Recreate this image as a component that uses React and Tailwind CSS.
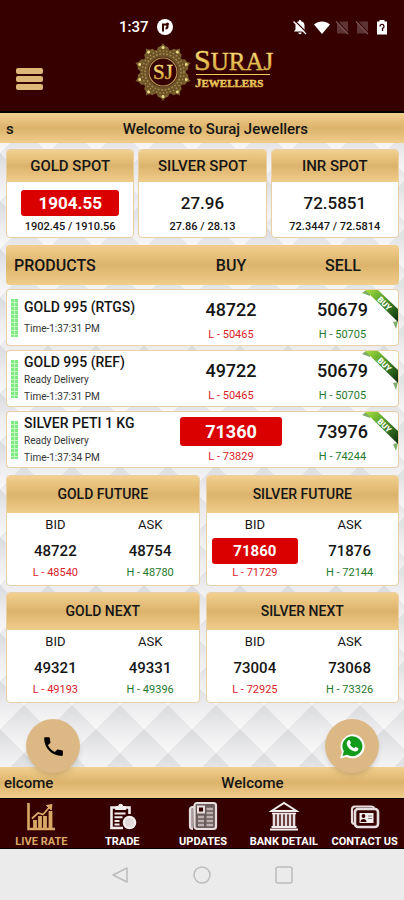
import { MdPhone } from "react-icons/md";

const spots = [
  { name: "GOLD SPOT", value: "1904.55", low: "1902.45", high: "1910.56", hot: true },
  { name: "SILVER SPOT", value: "27.96", low: "27.86", high: "28.13" },
  { name: "INR SPOT", value: "72.5851", low: "72.3447", high: "72.5814" },
];

const products = [
  { name: "GOLD 995 (RTGS)", time: "1:37:31 PM", buy: "48722", sell: "50679", low: "50465", high: "50705" },
  { name: "GOLD 995 (REF)", note: "Ready Delivery", time: "1:37:31 PM", buy: "49722", sell: "50679", low: "50465", high: "50705" },
  { name: "SILVER PETI 1 KG", note: "Ready Delivery", time: "1:37:34 PM", buy: "71360", sell: "73976", low: "73829", high: "74244", hot: true },
];

const contracts = [
  { name: "GOLD FUTURE", bid: "48722", ask: "48754", low: "48540", high: "48780" },
  { name: "SILVER FUTURE", bid: "71860", ask: "71876", low: "71729", high: "72144", hot: true },
  { name: "GOLD NEXT", bid: "49321", ask: "49331", low: "49193", high: "49396" },
  { name: "SILVER NEXT", bid: "73004", ask: "73068", low: "72925", high: "73326" },
];

const tabs = [
  { label: "LIVE RATE", Icon: ChartIcon, active: true },
  { label: "TRADE", Icon: ClipboardIcon },
  { label: "UPDATES", Icon: NewsIcon },
  { label: "BANK DETAIL", Icon: BankIcon },
  { label: "CONTACT US", Icon: ContactIcon },
];

function ChartIcon() {
  return (
    <svg viewBox="0 0 30 30" className="size-[30px]" fill="none" stroke="#d9a866">
      <path d="M2.500 2v26H29" strokeWidth="2.600" />
      <path d="M9 27v-8M14 27V15M19 27V15M24.500 27V10" strokeWidth="3.800" />
      <path d="M6 17.500l6-5.500 5 1.500 7-8" strokeWidth="1.800" />
      <path d="M20.500 4.500l5.500-1-.8 5.500z" fill="#d9a866" />
    </svg>
  );
}

function ClipboardIcon() {
  return (
    <svg viewBox="0 0 30 30" className="size-[30px]" fill="none" stroke="#f3eeee">
      <path d="M16 27H4.500V6.500H8M19 6.500h3.500V13" strokeWidth="2.600" />
      <path d="M8.500 8.500V5.500h3a2.200 2.200 0 0 1 4.400 0h3v3z" fill="#f3eeee" />
      <path d="M7.500 12.500h11M7.500 16.300h8M7.500 20h5M7.500 23.500h5" strokeWidth="2" />
      <circle cx="22.500" cy="21.500" r="6.800" fill="#f3eeee" stroke="none" />
      <circle cx="22.500" cy="21.500" r="4.600" fill="#e2d9d9" stroke="none" />
    </svg>
  );
}

function NewsIcon() {
  return (
    <svg viewBox="0 0 30 30" className="size-[30px]" fill="none" stroke="#e6dede">
      <path d="M6 6H4.500a2.500 2.500 0 0 0-2.500 2.500V25a3 3 0 0 0 3 3" strokeWidth="2.200" fill="#a89c9c" />
      <rect x="6.500" y="2" width="21.500" height="26" rx="2.500" strokeWidth="2.200" fill="#6d5c5c" />
      <rect x="10" y="5.500" width="6" height="6" fill="#370000" strokeWidth="2" />
      <path d="M18.500 8H25M18.500 12H25M10 16h6M18.500 16H25M10 20h6M18.500 20H25M10 24h6M18.500 24H25" stroke="#bdb0b0" strokeWidth="2.400" />
    </svg>
  );
}

function BankIcon() {
  return (
    <svg viewBox="0 0 30 30" className="size-[30px]" fill="none" stroke="#f3eeee">
      <path d="M2.500 10L15 2l12.500 8z" strokeWidth="2" />
      <path d="M3 12.500h24" strokeWidth="1.600" />
      <path d="M5 13v12M9 13v12M13 13v12M17 13v12M21 13v12M25 13v12" strokeWidth="2.600" stroke="#e6dede" />
      <path d="M2.500 26h25M1 28.500h28" strokeWidth="1.800" />
    </svg>
  );
}

function ContactIcon() {
  return (
    <svg viewBox="0 0 30 30" className="size-[30px]" fill="none" stroke="#e6dede">
      <path d="M4 23a3 3 0 0 1-2-3V8.500a3 3 0 0 1 3-3h16.500a3 3 0 0 1 2.800 2" strokeWidth="2.200" />
      <rect x="5" y="8" width="23" height="18" rx="3" strokeWidth="2.600" />
      <rect x="9.500" y="12" width="14" height="10" fill="#f3eeee" stroke="none" />
      <circle cx="13.500" cy="15" r="1.900" fill="#370000" stroke="none" />
      <path d="M10.500 21c0-4 6-4 6 0z" fill="#370000" stroke="none" />
      <path d="M18 15h4M18 17.500h4" stroke="#8d7a7a" strokeWidth="1" />
    </svg>
  );
}

function WhatsappIcon() {
  return (
    <svg viewBox="0 0 26 26" className="size-[26px]">
      <path d="M1 25.500l2-6.500A12 12 0 1 1 7.500 23.700z" fill="#fff" />
      <path d="M3.500 23l1.300-4.700A10 10 0 1 1 8.300 21.800z" fill="#129b1a" />
      <path d="M9.300 7.200c.5-.5 1.300-.4 1.600.2l.9 2c.2.400 0 .9-.9 1.900 1 2 2.300 3.100 4.200 3.900.9-1.100 1.300-1.500 1.800-1.200l2 1c.6.300.6.800.4 1.500-.4 1.300-1.800 2-3.300 1.900-3.900-.3-8-4.300-8.300-7.900-.1-1.400.7-2.500 1.600-3.300z" fill="#fff" />
    </svg>
  );
}

function Logo() {
  const petals = Array.from({ length: 10 }, (_, i) => i * 36);
  return (
    <svg viewBox="0 0 142 58" className="h-[58px] w-[142px]" role="img" aria-label="Suraj Jewellers">
      <defs>
        <linearGradient id="gold" x1="0" y1="0" x2="0" y2="1">
          <stop offset="0" stopColor="#fff3a0" />
          <stop offset="0.500" stopColor="#ecca5e" />
          <stop offset="1" stopColor="#b98a2c" />
        </linearGradient>
      </defs>
      <g transform="translate(29 29)">
        {petals.map((angle) => (
          <g key={angle} transform={`rotate(${angle})`}>
            <path d="M-7.500 -19L-5 -25Q-2 -25 0 -29Q2 -25 5 -25L7.500 -19z" fill="#79602f" />
            <circle cy="-24.500" r="1.500" fill="#ecd98a" />
            <circle cy="-18.500" r="1" fill="#c2a558" transform="rotate(18)" />
          </g>
        ))}
        <circle r="19" fill="none" stroke="#6b5127" strokeWidth="8" />
        <circle r="21" fill="none" stroke="#a58a4c" strokeWidth="1.500" strokeDasharray="1.500 2" />
        <circle r="18" fill="none" stroke="#a58a4c" strokeWidth="1.500" strokeDasharray="2 1.500" />
        <circle r="14" fill="#370000" stroke="#b89b54" strokeWidth="1.200" />
        <g fontFamily="Liberation Serif, serif" fontSize="21" fill="url(#gold)" stroke="url(#gold)" strokeWidth="0.400">
          <text y="7" textAnchor="middle">SJ</text>
        </g>
      </g>
      <g fontFamily="Liberation Serif, serif" fill="url(#gold)" stroke="#ecca5e" strokeWidth="0.400">
        <text x="60" y="27" fontSize="30">S<tspan fontSize="25">URAJ</tspan></text>
        <rect x="62" y="31" width="74" height="1" stroke="none" />
        <text x="61" y="44" fontSize="13" fontWeight="700">J<tspan fontSize="11">EWELLERS</tspan></text>
      </g>
    </svg>
  );
}

function StatusIcons() {
  return (
    <svg viewBox="0 0 96 18" className="h-[18px] w-[96px]">
      <path d="M2 13.500h12l-1.500-2V7.500c0-2.500-1.500-4-3.300-4.300a1.200 1.200 0 0 0-2.400 0C5 3.500 3.500 5 3.500 7.500v4zM6.300 14.500h3.400a1.700 1.700 0 0 1-3.400 0z" fill="#fff" />
      <path d="M2.500 2.500l13 13" stroke="#370000" strokeWidth="1.200" />
      <path d="M1.500 3.500l12.500 12.500" stroke="#fff" strokeWidth="1.300" />
      <path d="M22 6.500c4.500-4 11.500-4 16 0l-8 9.500z" fill="#fff" />
      <path d="M48 3.500h8v12H45v-9zM68 3.500h8v12H65v-9z" fill="#5f3434" />
      <path d="M45 3l12 13M65 3l12 13" stroke="#370000" strokeWidth="1.500" />
      <path d="M44 3.500l12 12.500M64 3.500l12 12.500" stroke="#7b5656" strokeWidth="1.200" />
      <path d="M85 3.500h2.500V2h5v1.500H95V16.500H85z" fill="#fff" />
      <path d="M88 8.500a2 2 0 1 1 2.500 1.900v2.600" fill="none" stroke="#370000" strokeWidth="1.300" />
    </svg>
  );
}

// strip of small green ticks on the left of each product
function Meter() {
  return (
    <svg viewBox="0 0 7 38" className="h-[38px] w-[7px] shrink-0">
      <rect width="7" height="38" fill="#7dea80" />
      <path d="M0 3.500h7M0 7.500h7M0 11.500h7M0 15.500h7M0 19.500h7M0 23.500h7M0 27.500h7M0 31.500h7M0 35.500h7M3.500 0v38" stroke="#c3f7c4" />
    </svg>
  );
}

function Ribbon() {
  return (
    <svg viewBox="0 0 38 40" className="absolute top-0 right-0 h-[40px] w-[38px]">
      <defs>
        <linearGradient id="ribbon" x1="0" y1="0" x2="1" y2="1">
          <stop offset="0" stopColor="#a9e03c" />
          <stop offset="0.450" stopColor="#4d9a2c" />
          <stop offset="1" stopColor="#0a2c0d" />
        </linearGradient>
      </defs>
      <path d="M2 3l4-3h4v6zM33 32l3 7 2-8z" fill="#7fae6a" />
      <path d="M5 0h13l20 19v13z" fill="url(#ribbon)" />
      <text transform="translate(17 10) rotate(45)" fontFamily="Roboto, sans-serif" fontSize="8" fontWeight="900" fill="#fff">BUY</text>
    </svg>
  );
}

// quilted diamond wallpaper behind the cards
function Wallpaper() {
  return (
    <svg className="absolute inset-0 h-full w-full" aria-hidden="true">
      <defs>
        <linearGradient id="tile" x1="0" y1="0" x2="0" y2="1">
          <stop offset="0" stopColor="#d9dadd" />
          <stop offset="0.500" stopColor="#ececee" />
          <stop offset="1" stopColor="#f9f9f9" />
        </linearGradient>
        <pattern id="quilt" width="48" height="48" y="34" patternUnits="userSpaceOnUse">
          <rect width="48" height="48" fill="#ececee" />
          <path d="M24 0l24 24-24 24L0 24z" fill="url(#tile)" />
          <path d="M0 -24l24 24L0 24l-24 -24z" fill="url(#tile)" />
          <path d="M48 -24l24 24-24 24L24 0z" fill="url(#tile)" />
          <path d="M0 24l24 24L0 72l-24 -24z" fill="url(#tile)" />
          <path d="M48 24l24 24-24 24-24 -24z" fill="url(#tile)" />
        </pattern>
      </defs>
      <rect width="100%" height="100%" fill="url(#quilt)" />
    </svg>
  );
}

const goldBar = "bg-linear-to-b from-[#f2d08f] via-[#dcb36b] to-[#f0cd8b]";
const cardBorder = "rounded-[4px] border border-[#e8cfa6] bg-white";

function Price({ value, hot, className }) {
  return (
    <div className={"rounded-[3px] text-center " + className + (hot ? " bg-[#db0000] font-bold text-white" : " font-medium")}>
      {value}
    </div>
  );
}

function SpotCard({ spot }) {
  return (
    <section className={"overflow-hidden text-center " + cardBorder}>
      <h2 className={"text-[15px] leading-8 font-medium " + goldBar}>{spot.name}</h2>
      <div className="px-[14px] pt-2 pb-[3px]">
        <Price value={spot.value} hot={spot.hot} className="text-[17px] leading-[26px]" />
        <p className="-mx-2 pt-1 text-[11px] leading-[14px] font-medium whitespace-nowrap">
          {spot.low} / {spot.high}
        </p>
      </div>
    </section>
  );
}

function ContractCard({ item }) {
  return (
    <section className={"overflow-hidden text-center " + cardBorder}>
      <h2 className={"text-[14px] leading-[37px] font-medium " + goldBar}>{item.name}</h2>
      <div className="grid grid-cols-2 gap-2 px-[5px] pt-[3px] pb-[3px]">
        <div>
          <h3 className="text-[13px] leading-[18px]">BID</h3>
          <Price value={item.bid} hot={item.hot} className="mt-1 text-[15px] leading-[26px]" />
          <p className="text-[11px] leading-[18px] text-[#d8232a]">L - {item.low}</p>
        </div>
        <div>
          <h3 className="text-[13px] leading-[18px]">ASK</h3>
          <Price value={item.ask} className="mt-1 text-[15px] leading-[26px]" />
          <p className="text-[11px] leading-[18px] text-[#1f7a2b]">H - {item.high}</p>
        </div>
      </div>
    </section>
  );
}

function ProductRow({ item }) {
  return (
    <tr className="h-[57px]">
      <td className="rounded-l-[4px] border border-r-0 border-[#e8cfa6] bg-white p-0 pl-1">
        <div className="flex items-center gap-[6px]">
          <Meter />
          <div className="whitespace-nowrap">
            <div className={"text-[14px] leading-[18px] font-medium " + (item.note ? "" : "pb-1")}>{item.name}</div>
            {item.note && <div className="text-[10px] leading-[18px] text-[#333]">{item.note}</div>}
            <div className={"text-[10px] text-[#333] " + (item.note ? "leading-[15px]" : "leading-[18px]")}>
              Time-{item.time}
            </div>
          </div>
        </div>
      </td>
      <td className="border-y border-[#e8cfa6] bg-white px-[5px] pt-[5px] pb-0 text-center align-top">
        <Price value={item.buy} hot={item.hot} className="text-[18px] leading-[29px]" />
        <div className="text-[11px] leading-[21px] text-[#d8232a]">L - {item.low}</div>
      </td>
      <td className="relative rounded-r-[4px] border border-l-0 border-[#e8cfa6] bg-white px-[5px] pt-[5px] pb-0 text-center align-top">
        <Price value={item.sell} className="text-[18px] leading-[29px]" />
        <div className="text-[11px] leading-[21px] text-[#1f7a2b]">H - {item.high}</div>
        <Ribbon />
      </td>
    </tr>
  );
}

export default function App() {
  return (
    <div className="flex min-h-screen flex-col overflow-hidden bg-[#ebebeb] font-[Roboto,sans-serif] text-[#151515]">
      <header className="h-[113px] border-b-2 border-black bg-[#370000]">
        <div className="flex items-center justify-between pt-[18px] pr-4 pl-[119px] text-white">
          <div className="flex items-center gap-2">
            <span className="text-[15px] leading-[18px] font-medium">1:37</span>
            <svg viewBox="0 0 16 16" className="size-4">
              <circle cx="8" cy="8" r="8" fill="#fff" />
              <path d="M6 12.500V5.500h2.500a2 2 0 0 1 0 4" fill="none" stroke="#370000" strokeWidth="2" />
              <circle cx="10.500" cy="5" r="1.500" fill="#370000" />
            </svg>
          </div>
          <StatusIcons />
        </div>
        <div className="flex items-start gap-[91px] pt-[7px] pl-4">
          <button aria-label="Menu" className="mt-[25px] flex w-[27px] flex-col gap-[2px]">
            <span className="h-[6px] w-full rounded-[2px] bg-[#deb678]" />
            <span className="h-[6px] w-full rounded-[2px] bg-[#deb678]" />
            <span className="h-[6px] w-full rounded-[2px] bg-[#deb678]" />
          </button>
          <Logo />
        </div>
      </header>

      <div className={"flex h-[30px] items-center gap-[109px] pt-[2px] pl-[6px] text-[15px] font-medium whitespace-nowrap " + goldBar}>
        <span>s</span>
        <span>Welcome to Suraj Jewellers</span>
      </div>

      <main className="relative flex-1">
        <Wallpaper />
        <div className="relative flex flex-col gap-[3px] pt-[6px] pr-[5px] pl-[6px]">
          <div className="grid grid-cols-3 gap-1">
            {spots.map((spot) => (
              <SpotCard key={spot.name} spot={spot} />
            ))}
          </div>

          <table className="w-full table-fixed border-separate border-spacing-x-0 border-spacing-y-1">
            <thead>
              <tr className={"h-10 text-[16px] " + goldBar}>
                <th className="w-[43%] rounded-l-[4px] p-0 pt-[2px] pl-2 text-left font-medium">PRODUCTS</th>
                <th className="p-0 pt-[2px] font-medium">BUY</th>
                <th className="rounded-r-[4px] p-0 pt-[2px] font-medium">SELL</th>
              </tr>
            </thead>
            <tbody>
              {products.map((item) => (
                <ProductRow key={item.name} item={item} />
              ))}
            </tbody>
          </table>

          <div className="grid grid-cols-2 gap-[6px]">
            {contracts.map((item) => (
              <ContractCard key={item.name} item={item} />
            ))}
          </div>
        </div>

        <a href="tel:" aria-label="Call" className="absolute -bottom-[6px] left-[26px] z-10 flex size-[54px] items-center justify-center rounded-full bg-[#dcb984] text-black shadow-md">
          <MdPhone className="size-[25px]" />
        </a>
        <a href="#whatsapp" aria-label="WhatsApp" className="absolute right-[25px] -bottom-[6px] z-10 flex size-[54px] items-center justify-center rounded-full bg-[#dcb984] shadow-md">
          <WhatsappIcon />
        </a>
      </main>

      <div className={"flex h-[31px] items-center gap-[168px] pt-[2px] pl-[4px] text-[15px] font-medium whitespace-nowrap " + goldBar}>
        <span>elcome</span>
        <span>Welcome</span>
      </div>

      <nav className="grid h-[51px] grid-cols-5 border-y border-black bg-[#370000]">
        {tabs.map(({ label, Icon, active }) => (
          <a
            key={label}
            href="#"
            className={"flex flex-col items-center pt-[2px] pl-[2px] text-[11px] leading-[22px] font-bold whitespace-nowrap " + (active ? "text-[#d9a866]" : "text-white")}
          >
            <Icon />
            {label}
          </a>
        ))}
      </nav>

      <div className="flex h-[51px] items-center justify-center gap-16">
        <svg viewBox="0 0 18 18" className="size-[18px]" fill="none" stroke="#bcbcbc" strokeWidth="1.500">
          <path d="M16 2v14L2 9z" strokeLinejoin="round" />
        </svg>
        <svg viewBox="0 0 18 18" className="size-[18px]" fill="none" stroke="#bcbcbc" strokeWidth="1.500">
          <circle cx="9" cy="9" r="8" />
        </svg>
        <svg viewBox="0 0 18 18" className="size-[18px]" fill="none" stroke="#bcbcbc" strokeWidth="1.500">
          <rect x="1" y="1" width="16" height="16" rx="2" />
        </svg>
      </div>
    </div>
  );
}
